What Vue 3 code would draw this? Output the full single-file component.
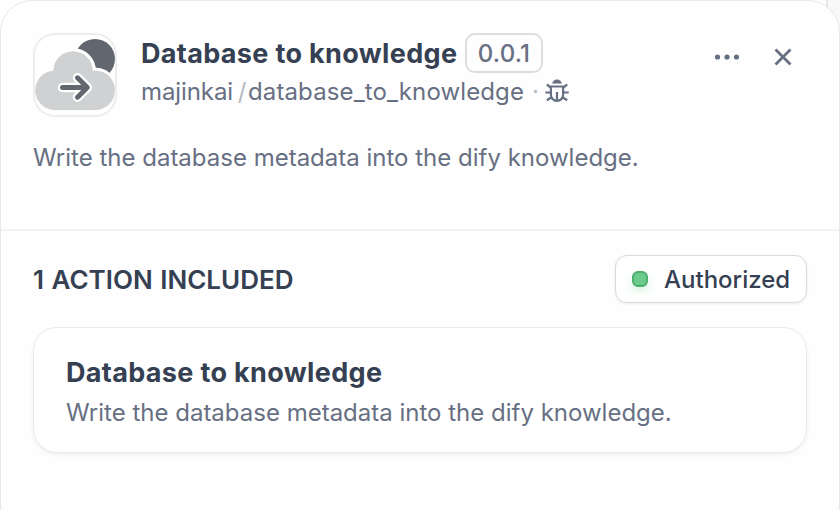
<script setup>
const name = 'Database to knowledge'
const description = 'Write the database metadata into the dify knowledge.'
</script>

<template>
  <div class="page">
    <main class="panel">
      <header class="header">
        <div class="top">
          <svg class="logo" viewBox="33 33 84 84">
            <rect x="34" y="34" width="82" height="82" rx="21" fill="#fff" stroke="#ededee" stroke-width="2" />
            <circle cx="95" cy="59" r="20" fill="#62666f" />
            <circle cx="73" cy="71" r="23" fill="#fff" />
            <path d="M92 67.500H95A22.800 22.800 0 0 1 114 78V90H90V68Z" fill="#fff" />
            <g fill="#d0d1d3">
              <circle cx="73" cy="71" r="19.700" />
              <circle cx="55" cy="90.300" r="19.800" />
              <circle cx="95.200" cy="90.300" r="19.800" />
              <rect x="55" y="71" width="40" height="39.100" />
            </g>
            <path d="M115.900 60V100" stroke="#ededee" stroke-width="2" />
            <g fill="none" stroke-linecap="round" stroke-linejoin="round">
              <path d="M62.500 87.500H87M77.500 77.800L87.300 87.500L77.500 97.200" stroke="#fff" stroke-width="9.500" />
              <path d="M62.500 87.500H87M77.500 77.800L87.300 87.500L77.500 97.200" stroke="#62666f" stroke-width="5" />
            </g>
          </svg>
          <div class="identity">
            <div class="title-row">
              <h1 class="title">{{ name }}</h1>
              <span class="version">0.0.1</span>
            </div>
            <div class="origin">
              <span class="org">majinkai</span>
              <span class="slash">/</span>
              <span class="package">database_to_knowledge</span>
              <span class="dot">·</span>
              <svg class="bug" viewBox="0 0 24 24" fill="none" stroke="#676f83" stroke-width="2.200">
                <path d="M7.500 4.300A4.600 4.600 0 0 1 16.500 4.300Z" fill="#676f83" stroke="#676f83" stroke-width="0.500" />
                <path d="M5 7.500H19M5.900 7.500V15.800A6.100 6.100 0 0 0 18.100 15.800V7.500M12 13V22M0.300 13.500H6M18 13.500H23.700M1.800 5.500L5.500 8.300M22.200 5.500L18.500 8.300M1.800 21.300L6.500 18.300M22.200 21.300L17.500 18.300" />
              </svg>
            </div>
          </div>
          <div class="actions">
            <svg class="more" viewBox="0 0 26 8" fill="#676f83">
              <circle cx="3.500" cy="4" r="2.600" /><circle cx="13" cy="4" r="2.600" /><circle cx="22.500" cy="4" r="2.600" />
            </svg>
            <svg class="close" viewBox="0 0 18 18" fill="none" stroke="#676f83" stroke-width="2.800">
              <path d="M1.500 1.500L16.500 16.500M16.500 1.500L1.500 16.500" />
            </svg>
          </div>
        </div>
        <p class="description">{{ description }}</p>
      </header>
      <section class="content">
        <div class="section-head">
          <h2 class="heading">1 ACTION INCLUDED</h2>
          <button class="authorized"><i class="status"></i><span>Authorized</span></button>
        </div>
        <article class="card">
          <h3 class="card-title">{{ name }}</h3>
          <p class="card-text">{{ description }}</p>
        </article>
      </section>
    </main>
  </div>
</template>

<style>
body { margin: 0; background: #f9f9fa; }
</style>

<style scoped>
* { box-sizing: border-box; margin: 0; }
.page {
  width: 840px;
  height: 510px;
  overflow: hidden;
  background: linear-gradient(90deg, #fff 0 826px, #e6e7e9 826px 828px, #f8f8f9 828px);
  font-family: Inter, "Liberation Sans", sans-serif;
  color: #354052;
}
.panel {
  height: 540px;
  border: 1px solid #e8e8e9;
  border-radius: 32px;
  background: #fefefe;
}
.header { height: 230px; padding: 32px 32px 0; border-bottom: 2px solid #f2f2f3; }
.top { display: flex; height: 84px; }
.logo { width: 84px; height: 84px; flex: none; }
.identity { flex: 1; padding-left: 24px; white-space: nowrap; }
.title-row { display: flex; align-items: center; height: 40px; gap: 8px; }
.title { width: 316px; padding-top: 2px; font-size: 27px; line-height: 38px; font-weight: 650; letter-spacing: 0.34px; }
.version {
  width: 78px;
  height: 40px;
  border: 2px solid #dcdde2;
  border-radius: 10px;
  color: #676f83;
  font-size: 24px;
  font-weight: 500;
  line-height: 37px;
  letter-spacing: 0.2px;
  text-align: center;
}
.origin { display: flex; align-items: center; height: 37px; color: #676f83; font-size: 24px; line-height: 37px; }
.org { width: 95px; letter-spacing: -0.1px; }
.slash { width: 12px; color: #b4b9c3; text-align: center; }
.package { width: 278px; letter-spacing: 0.12px; }
.dot { width: 19px; color: #b0b5c0; text-align: center; }
.bug { width: 24px; height: 24px; margin-bottom: 1px; }
.actions { display: flex; align-items: center; height: 48px; gap: 34px; padding-right: 15px; }
.more { width: 26px; height: 8px; }
.close { width: 18px; height: 18px; }
.description { padding-top: 21px; color: #676f83; font-size: 24px; line-height: 40px; white-space: nowrap; }
.content { padding: 24px 32px; }
.section-head { display: flex; align-items: center; justify-content: space-between; height: 48px; }
.heading { padding-top: 2px; font-size: 26px; line-height: 46px; font-weight: 600; letter-spacing: 0; word-spacing: 1px; white-space: nowrap; }
.authorized {
  display: flex;
  align-items: center;
  width: 192px;
  height: 48px;
  padding: 0 0 0 16px;
  gap: 16px;
  border: 1px solid #d9dadd;
  border-radius: 12px;
  background: #fff;
  box-shadow: 0 1px 3px rgba(16, 24, 40, 0.08);
  color: #354052;
  font-family: inherit;
  font-size: 24px;
  font-weight: 500;
  white-space: nowrap;
}
.authorized span { padding-top: 1px; }
.status {
  width: 16px;
  height: 16px;
  border: 2px solid #4cad6c;
  border-radius: 6px;
  background: #6ccb8d;
  box-shadow: 0 4px 10px rgba(60, 190, 110, 0.22);
}
.card {
  height: 126px;
  margin-top: 24px;
  padding: 25px 32px;
  border: 1px solid #ebebed;
  border-radius: 24px;
  background: #fff;
  box-shadow: 0 2px 4px rgba(16, 24, 40, 0.06);
  white-space: nowrap;
}
.card-title { font-size: 27px; line-height: 40px; font-weight: 650; letter-spacing: 0.34px; }
.card-text { color: #676f83; font-size: 24px; line-height: 40px; }
</style>
